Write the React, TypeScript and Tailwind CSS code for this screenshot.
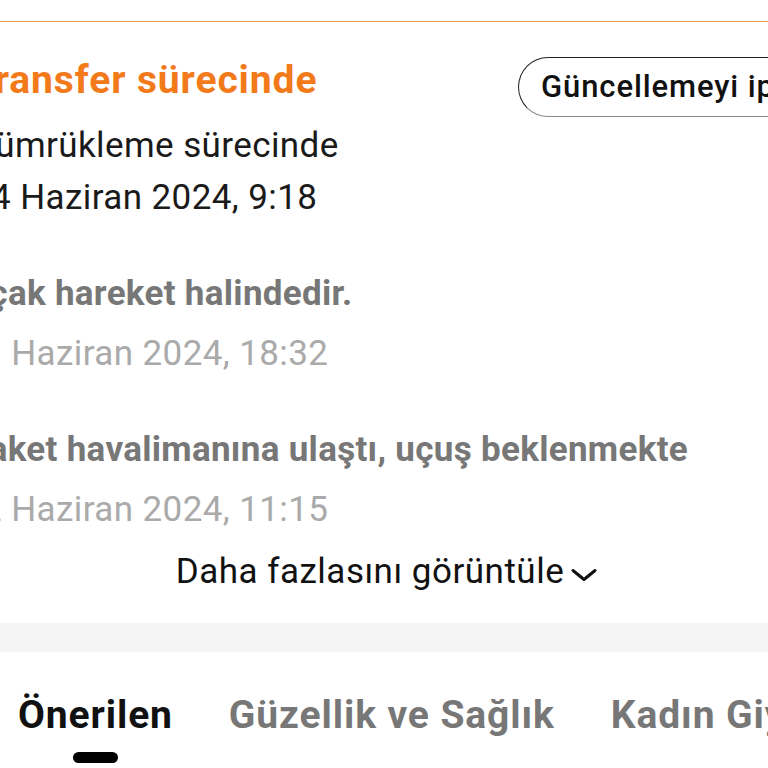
import React from 'react';

const ChevronDown: React.FC = () => (
    <svg width="28" height="14" viewBox="0 0 28 14" fill="none" stroke="currentColor" strokeWidth="3" strokeLinecap="round" strokeLinejoin="round" className="ml-[6px] mt-[6px]">
        <path d="M3 2.5l11 9 11-9" />
    </svg>
);

const events = [
    { title: 'Uçak hareket halindedir.', date: '13 Haziran 2024, 18:32' },
    { title: 'Paket havalimanına ulaştı, uçuş beklenmekte', date: '12 Haziran 2024, 11:15' },
];

const tabs = ['Önerilen', 'Güzellik ve Sağlık', 'Kadın Giyim'];

const App: React.FC = () => {
    return (
        <div className="w-[768px] h-[768px] overflow-hidden bg-white font-['Roboto',sans-serif]">
            <div className="h-[21px]" />
            <div className="h-[1px] bg-[#e59d55]" />

            {/* current status */}
            <div className="flex items-start -ml-[29px] mt-[35px] whitespace-nowrap">
                <div className="flex flex-col w-[547px] shrink-0">
                    <div className="text-[39px] leading-[46px] tracking-[0.9px] font-bold text-[#f27a1a]">Transfer sürecinde</div>
                    <div className="mt-[17px] text-[35px] leading-[52px] tracking-[0.4px] text-[#1a1a1a]">Gümrükleme sürecinde</div>
                    <div className="text-[35px] leading-[52px] tracking-[0.4px] text-[#1a1a1a]">14 Haziran 2024, 9:18</div>
                </div>
                <button className="shrink-0 h-[60px] pl-[22px] pr-[24px] rounded-full border border-[#222] border-b-[#888] text-[31px] tracking-[0.9px] font-medium text-[#111]">
                    Güncellemeyi iptal et
                </button>
            </div>

            {/* history */}
            <div className="flex flex-col mt-[46px] whitespace-nowrap">
                {events.map((ev, i) => (
                    <div key={i} className={`flex flex-col ${i === 0 ? 'mb-[36px]' : ''}`}>
                        <div className="-ml-[34px] text-[35px] leading-[48px] tracking-[0.3px] font-bold text-[#777]">{ev.title}</div>
                        <div className="-ml-[38px] text-[35px] leading-[72px] tracking-[0.4px] text-[#aaa]">{ev.date}</div>
                    </div>
                ))}
            </div>

            <div className="flex items-center justify-center h-[52px] pl-[6px] text-[35px] tracking-[0.5px] text-[#111]">
                <span>Daha fazlasını görüntüle</span>
                <ChevronDown />
            </div>

            <div className="h-[29px] bg-[#f5f5f5] mt-[25px]" />

            {/* category tabs */}
            <div className="flex gap-[56px] pl-[18px] mt-[40px] whitespace-nowrap">
                {tabs.map((t, i) => (
                    <div key={t} className="flex flex-col items-center">
                        <span className={`text-[39px] leading-[46px] tracking-[0.9px] font-bold ${i === 0 ? 'text-[#111]' : 'text-[#777]'}`}>{t}</span>
                        <div className={`mt-[14px] w-[45px] h-[11px] rounded-full ${i === 0 ? 'bg-black' : 'bg-transparent'}`} />
                    </div>
                ))}
            </div>
        </div>
    );
};

export default App;
